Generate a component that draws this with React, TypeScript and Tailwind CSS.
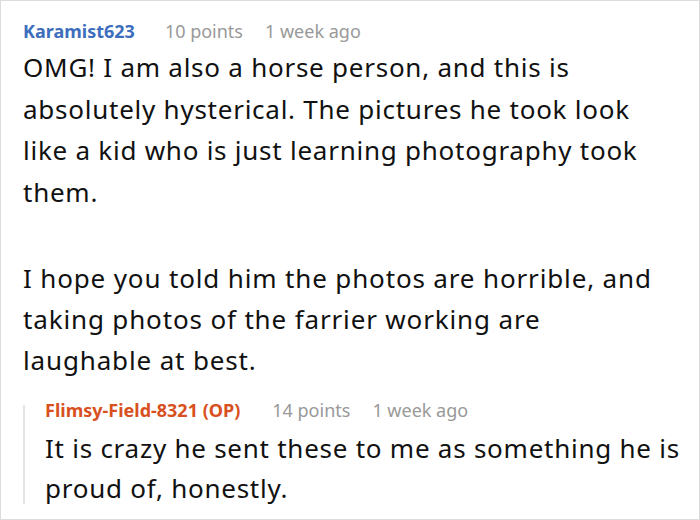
export default function App() {
  return (
    <div
      className="w-[700px] h-[520px] bg-white border border-[#dcdcdc] overflow-hidden"
      style={{ fontFamily: '"Noto Sans", "Open Sans", sans-serif' }}
    >
      <div className="pl-[22px] pt-[16px]">
        <div className="flex items-baseline text-[18px] leading-[28px]">
          <span className="font-bold text-[#3d6ebd]">Karamist623</span>
          <span className="ml-[30px] text-[#999]">10 points</span>
          <span className="ml-[22px] text-[#999]">1 week ago</span>
        </div>
        <p className="mt-[2px] text-[26px] leading-[41.5px] tracking-[0.75px] text-[#111] whitespace-nowrap">
          OMG! I am also a horse person, and this is
          <br />
          absolutely hysterical. The pictures he took look
          <br />
          like a kid who is just learning photography took
          <br />
          them.
        </p>
        <p className="mt-[45px] text-[26px] leading-[41px] tracking-[0.85px] text-[#111] whitespace-nowrap">
          I hope you told him the photos are horrible, and
          <br />
          taking photos of the farrier working are
          <br />
          laughable at best.
        </p>
        <div className="flex mt-[15px]">
          <div className="w-[2px] bg-[#e4e4e4] mt-[9px] mb-[4px]" />
          <div className="pl-[20px]">
            <div className="flex items-baseline text-[18px] leading-[28px]">
              <span className="font-bold text-[#d8501e]">Flimsy-Field-8321 (OP)</span>
              <span className="ml-[32px] text-[#999]">14 points</span>
              <span className="ml-[22px] text-[#999]">1 week ago</span>
            </div>
            <p className="mt-[4px] text-[26px] leading-[40px] tracking-[0.75px] text-[#111] whitespace-nowrap">
              It is crazy he sent these to me as something he is
              <br />
              proud of, honestly.
            </p>
          </div>
        </div>
      </div>
    </div>
  );
}
